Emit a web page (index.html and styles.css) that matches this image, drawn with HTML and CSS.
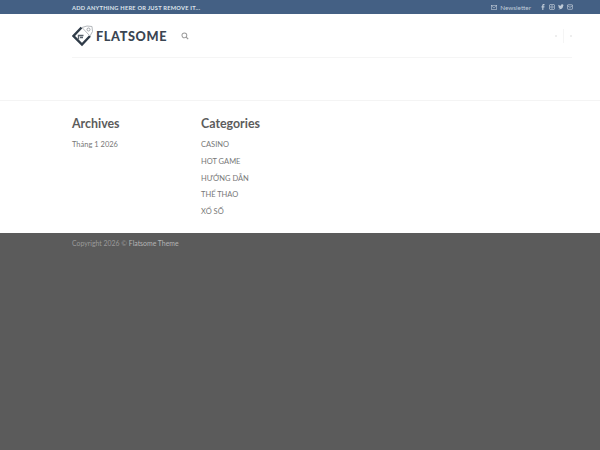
FILE: index.html
```html
<!DOCTYPE html>
<html lang="vi">
<head>
<meta charset="utf-8">
<title>Flatsome</title>
<link rel="stylesheet" href="styles.css">
</head>
<body>
<div class="topbar">
  <div class="wrap topbar-in">
    <span class="promo">ADD ANYTHING HERE OR JUST REMOVE IT...</span>
    <div class="top-right">
      <svg class="ico" viewBox="0 0 10 8"><rect x=".5" y=".5" width="9" height="7" fill="none" stroke="currentColor"/><path d="M.5 1l4.500 3.500L9.500 1" fill="none" stroke="currentColor"/></svg>
      <span class="news">Newsletter</span>
      <span class="socials">
        <svg class="ico-s" viewBox="0 0 8 8"><path d="M3 8V4.500H2V3h1V2c0-1.300.7-2 2-2h1v1.500H5.200c-.5 0-.7.200-.7.700V3H6l-.2 1.500H4.500V8z" fill="currentColor"/></svg>
        <svg class="ico-s" viewBox="0 0 8 8"><rect x=".5" y=".5" width="7" height="7" rx="2" fill="none" stroke="currentColor"/><circle cx="4" cy="4" r="1.600" fill="none" stroke="currentColor"/></svg>
        <svg class="ico-s" viewBox="0 0 8 8"><path d="M0 6.500c2.500 1.300 6.800.5 7-4.500l1-1-1 .2C6.300 0 4 .300 4 2.300 2.500 2.300 1.200 1.500.6 1c-.4 1 0 2 .6 2.500L.5 3.300c0 1 .7 1.600 1.400 1.900H1.200c.3.700 1 1 1.600 1C2 6.700 1 6.700 0 6.500z" fill="currentColor"/></svg>
        <svg class="ico-s" viewBox="0 0 8 8"><rect x=".5" y="1" width="7" height="6" rx="1" fill="none" stroke="currentColor"/><path d="M.5 2L4 4.500 7.500 2" fill="none" stroke="currentColor"/></svg>
      </span>
    </div>
  </div>
</div>
<header class="header">
  <div class="wrap header-in">
    <div class="brand">
      <svg class="logo" viewBox="0 0 22 22">
        <path d="M9.500 2.500L1.500 11l8.500 8.500 8-8.500" fill="none" stroke="#2f3b48" stroke-width="2.400"/>
        <path d="M10 2.500l5-1.500 5 .5.500 5-2.500 4.500-8-8.500z" fill="none" stroke="#b4b8bc" stroke-width="1"/>
        <path d="M6.500 14.500V10.500h5M8 12.500h3" fill="none" stroke="#59626c" stroke-width="1.400"/>
        <circle cx="16.500" cy="4.500" r="1.500" fill="none" stroke="#a0a5aa"/>
      </svg>
      <span class="brand-name">FLATSOME</span>
      <svg class="search" viewBox="0 0 10 10"><circle cx="4.200" cy="4.200" r="3" fill="none" stroke="#9a9a9a" stroke-width="1.300"/><path d="M6.500 6.500L9 9" stroke="#9a9a9a" stroke-width="1.500"/></svg>
    </div>
    <div class="header-tools">
      <span class="dot"></span>
      <span class="sep"></span>
      <span class="dot"></span>
    </div>
  </div>
  <div class="wrap"><div class="rule"></div></div>
</header>
<main class="widgets">
  <div class="wrap widget-row">
    <section class="widget">
      <h3 class="widget-title">Archives</h3>
      <ul class="list"><li>Tháng 1 2026</li></ul>
    </section>
    <section class="widget">
      <h3 class="widget-title">Categories</h3>
      <ul class="list">
        <li>CASINO</li>
        <li>HOT GAME</li>
        <li>HƯỚNG DẪN</li>
        <li>THỂ THAO</li>
        <li>XỔ SỐ</li>
      </ul>
    </section>
  </div>
</main>
<footer class="footer">
  <div class="wrap copyright">Copyright 2026 © <strong class="theme">Flatsome Theme</strong></div>
</footer>
</body>
</html>
```
FILE: styles.css
```css
* { box-sizing: border-box; }
html, body { height: 100%; }
body {
  margin: 0;
  display: flex;
  flex-direction: column;
  background: #5b5b5b;
  font-family: Lato, "Liberation Sans", sans-serif;
  color: #777;
}
.wrap { width: 500px; margin-left: 72px; }
.topbar { height: 14px; background: #446084; color: #dfe5ec; flex: none; }
.topbar-in { height: 14px; display: flex; align-items: center; justify-content: space-between; }
.promo { font-size: 5.700px; font-weight: 700; letter-spacing: .24px; white-space: nowrap; }
.top-right { display: flex; align-items: center; color: #bfcad7; }
.ico { width: 6px; height: 5px; margin-right: 3px; }
.news { font-size: 6.400px; margin-right: 9px; }
.socials { display: flex; align-items: center; gap: 3px; margin-right: -1px; }
.ico-s { width: 6px; height: 6px; display: block; }
.header { background: #fff; height: 87px; flex: none; border-bottom: 1px solid #f4f4f4; }
.header-in { height: 43px; display: flex; align-items: center; justify-content: space-between; }
.brand { display: flex; align-items: center; }
.logo { width: 22px; height: 22px; margin-right: 2px; }
.brand-name { font-size: 12.700px; font-weight: 900; color: #3a4552; letter-spacing: .62px; }
.search { width: 8px; height: 8px; margin-left: 14px; }
.header-tools { display: flex; align-items: center; gap: 6px; }
.dot { width: 2px; height: 2px; background: #e8e8e8; border-radius: 50%; }
.sep { width: 1px; height: 14px; background: #f5f5f5; }
.rule { height: 1px; background: #f5f5f5; }
.widgets { background: #fff; height: 132px; flex: none; padding-top: 15px; }
.widget-row { display: flex; }
.widget { width: 129px; }
.widget-title { margin: 0 0 5px; font-size: 12.400px; line-height: 16px; font-weight: 700; color: #5c5c5c; }
.list { margin: 0; padding: 0; list-style: none; font-size: 7.500px; line-height: 16.800px; color: #777; }
.footer { flex: 1; background: #5b5b5b; padding-top: 5px; }
.copyright { font-size: 6.900px; line-height: 10px; color: #9a9a9a; }
.theme { font-weight: 400; color: #b4b4b4; }
```
